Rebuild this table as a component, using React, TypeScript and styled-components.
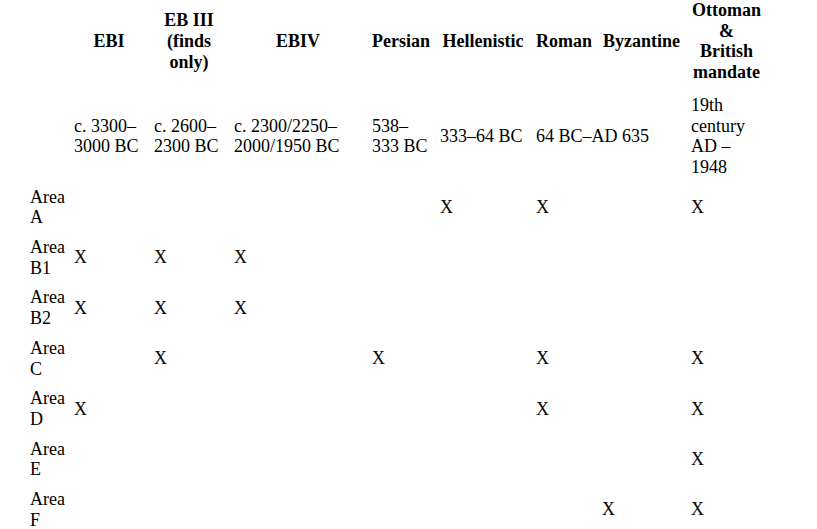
import React from "react";
import styled, { createGlobalStyle } from "styled-components";

const Global = createGlobalStyle`
  html, body {
    margin: 0;
    padding: 0;
    background: #ffffff;
  }
  body {
    font-family: "Liberation Serif", "Times New Roman", serif;
    color: #000000;
  }
`;

const Page = styled.div`
  padding: 0 0 0 25px;
  margin-top: -4.5px;
`;

const Table = styled.table`
  border-collapse: collapse;
  table-layout: fixed;
  width: 742px;
  font-family: "Liberation Serif", "Times New Roman", serif;
  font-size: 18px;
  line-height: 20.7px;
  color: #000;
`;

const Col = styled.col<{ $w: number }>`
  width: ${(p) => p.$w}px;
`;

const Head = styled.th`
  font-weight: bold;
  text-align: center;
  vertical-align: middle;
  padding: 4.5px 5px 7.5px;
`;

const Cell = styled.td`
  text-align: left;
  vertical-align: middle;
  padding: 4.5px 5px;
  font-weight: normal;
`;

const RowLabel = styled(Cell)``;

const widths = [44, 80, 80, 138, 68, 96, 66, 89, 81];

const headers = [
  "",
  "EBI",
  "EB III (finds only)",
  "EBIV",
  "Persian",
  "Hellenistic",
  "Roman",
  "Byzantine",
  "Ottoman & British mandate",
];

type Row = { label: string; marks: boolean[] };

const rows: Row[] = [
  { label: "Area A", marks: [false, false, false, false, true, true, false, true] },
  { label: "Area B1", marks: [true, true, true, false, false, false, false, false] },
  { label: "Area B2", marks: [true, true, true, false, false, false, false, false] },
  { label: "Area C", marks: [false, true, false, true, false, true, false, true] },
  { label: "Area D", marks: [true, false, false, false, false, true, false, true] },
  { label: "Area E", marks: [false, false, false, false, false, false, false, true] },
  { label: "Area F", marks: [false, false, false, false, false, false, true, true] },
];

export default function App() {
  return (
    <>
      <Global />
      <Page>
        <Table>
          <colgroup>
            {widths.map((w, i) => (
              <Col key={i} $w={w} />
            ))}
          </colgroup>
          <thead>
            <tr>
              {headers.map((h, i) => (
                <Head key={i}>{h}</Head>
              ))}
            </tr>
          </thead>
          <tbody>
            <tr>
              <Cell></Cell>
              <Cell>c. 3300–3000 BC</Cell>
              <Cell>c. 2600–2300 BC</Cell>
              <Cell>c. 2300/2250–2000/1950 BC</Cell>
              <Cell>538–333 BC</Cell>
              <Cell>333–64 BC</Cell>
              <Cell colSpan={2}>64 BC–AD 635</Cell>
              <Cell>19th century AD – 1948</Cell>
            </tr>
            {rows.map((r) => (
              <tr key={r.label}>
                <RowLabel>{r.label}</RowLabel>
                {r.marks.map((m, i) => (
                  <Cell key={i}>{m ? "X" : ""}</Cell>
                ))}
              </tr>
            ))}
          </tbody>
        </Table>
      </Page>
    </>
  );
}
